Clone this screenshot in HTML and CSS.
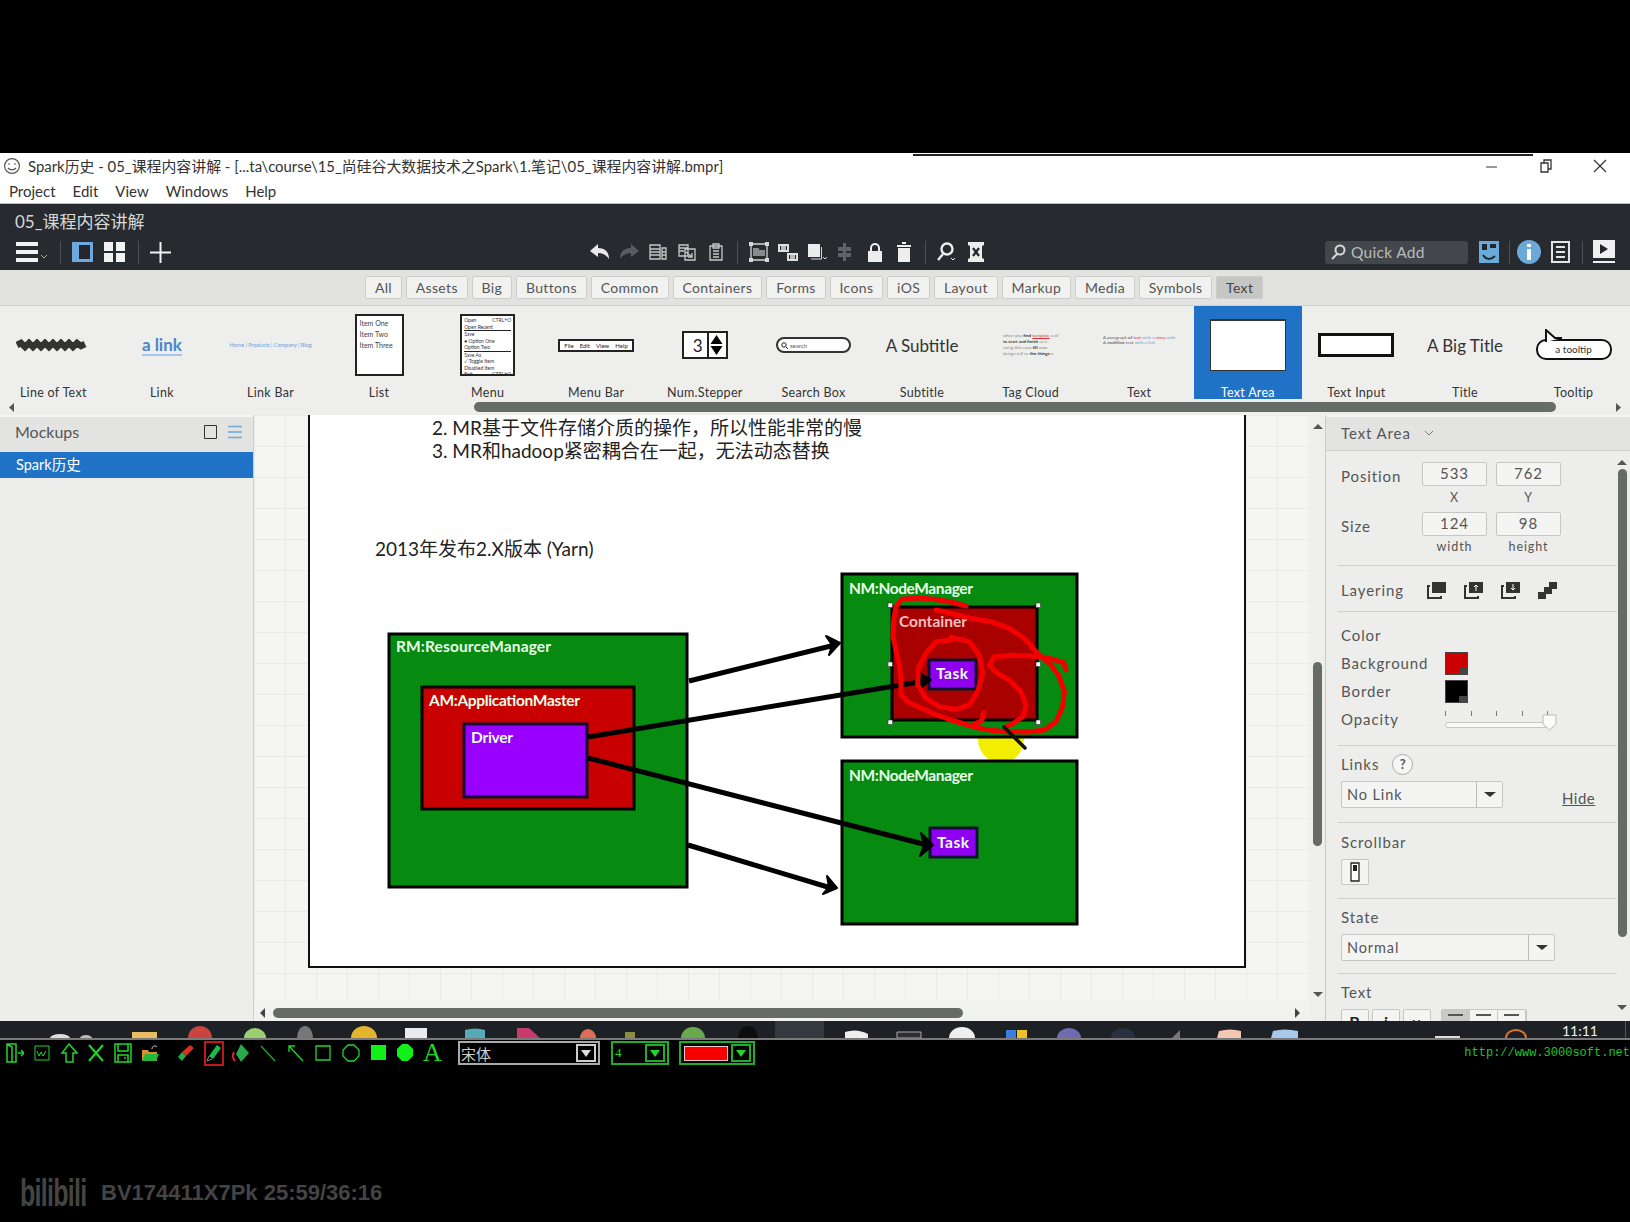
FILE: index.html
```html
<!DOCTYPE html>
<html>
<head>
  <meta charset="UTF-8">
  <title>Spark历史 - Balsamiq</title>
  <link rel="stylesheet" href="styles.css">
</head>
<body>
  <div class="video-top"></div>
  <div class="stray-line"></div>

  <div class="titlebar">
    <svg class="app-logo" width="18" height="18" viewBox="0 0 18 18" fill="none" stroke="#555" stroke-width="1.2"><circle cx="9" cy="9" r="7.4"/><path d="M5 7h2M11 7h2M5 11c2 2.4 6 2.4 8 0"/></svg>
    <span class="title-text">Spark历史 - 05_课程内容讲解 - [...ta\course\15_尚硅谷大数据技术之Spark\1.笔记\05_课程内容讲解.bmpr]</span>
    <div class="win-controls">
      <svg width="14" height="14" viewBox="0 0 14 14" stroke="#333" fill="none"><path d="M1 8h11"/></svg>
      <svg width="14" height="14" viewBox="0 0 14 14" stroke="#333" fill="none" stroke-width="1.3"><path d="M2 4h7v9H2zM5 4V1h7v9H9"/></svg>
      <svg width="14" height="14" viewBox="0 0 14 14" stroke="#333" fill="none" stroke-width="1.2"><path d="M1 1l12 12M13 1L1 13"/></svg>
    </div>
  </div>
  <div class="menubar">
    <span>Project</span><span>Edit</span><span>View</span><span>Windows</span><span>Help</span>
  </div>

  <div class="header">
    <div class="doc-name">05_课程内容讲解</div>
    <div class="toolbar">
      <div class="tool-left">
        <svg width="24" height="20" viewBox="0 0 24 20" fill="#f2f2f2"><path d="M0 0h22v4H0zM0 8h22v4H0zM0 16h22v4H0z"/></svg>
        <svg class="mini-chevron" width="6" height="4" viewBox="0 0 6 4" fill="none" stroke="#aaa"><path d="M0 0l3 3 3-3"/></svg>
        <i class="tool-sep sep-a"></i>
        <svg class="icon-panel" width="21" height="20" viewBox="0 0 21 20"><path fill="#6fa8dc" d="M0 0h21v20H0z"/><path fill="#23272b" d="M7 3h11v14H7z"/></svg>
        <svg class="icon-grid" width="21" height="20" viewBox="0 0 21 20" fill="#f2f2f2"><path d="M0 0h9v9H0zM12 0h9v9h-9zM0 11h9v9H0zM12 11h9v9h-9z"/></svg>
        <i class="tool-sep sep-b"></i>
        <svg class="icon-plus" width="21" height="21" viewBox="0 0 21 21" fill="#f2f2f2"><path d="M9.5 0h2v9.5H21v2h-9.5V21h-2v-9.5H0v-2h9.5z"/></svg>
      </div>
      <div class="tool-center">
        <svg class="tico" viewBox="0 0 20 20" fill="#e9e9e9"><path d="M8 2L0 9l8 6v-4c5 0 8 2 11 6 0-7-4-11-11-11z"/></svg>
        <svg class="tico" viewBox="0 0 20 20" fill="#595d61"><path d="M12 2l8 7-8 6v-4c-5 0-8 2-11 6 0-7 4-11 11-11z"/></svg>
        <svg class="tico" viewBox="0 0 20 20" fill="none" stroke="#c8c8c8" stroke-width="1.3"><path d="M2 3h10v14H2zM2 7h10M2 10h10M2 13h10M14 6h4v11h-4zM14 10h4M14 13h4"/></svg>
        <svg class="tico" viewBox="0 0 20 20" fill="none" stroke="#c8c8c8" stroke-width="1.3"><path d="M2 3h9v11H2zM2 6h9M2 9h5M8 7h10v11H8zM9 10l6 5M15 11v4h-4"/></svg>
        <svg class="tico" viewBox="0 0 20 20" fill="none" stroke="#c8c8c8" stroke-width="1.3"><path d="M4 4h12v14H4zM7 2h6v4H7zM7 9h6M7 12h6M7 15h6"/></svg>
        <i class="tool-sep center-sep"></i>
        <svg class="tico" viewBox="0 0 20 20" fill="none" stroke="#d8d8d8" stroke-width="1.3"><path d="M2 2h16v16H2z"/><path fill="#d8d8d8" stroke="none" d="M10 8h6v6h-6zM4 6h6v8H4z" opacity=".55"/><path fill="#d8d8d8" stroke="none" d="M0 0h4v4H0zM16 0h4v4h-4zM0 16h4v4H0zM16 16h4v4h-4z"/></svg>
        <svg class="tico" viewBox="0 0 20 20" fill="#e0e0e0"><path d="M0 2h11v8H0zM9 11h11v8H9z"/><path fill="#23272b" d="M2 4h7v4H2zM11 13h7v4h-7z"/><path d="M3 4h5v4H3zM12 13h5v4h-5z" opacity=".8"/></svg>
        <svg class="tico" viewBox="0 0 20 20" fill="none" stroke="#d8d8d8"><path fill="#ececec" stroke="none" d="M1 2h12v13H1z"/><path d="M14.500 5v12H4M16 15l2 2 2-2"/></svg>
        <svg class="tico" viewBox="0 0 20 20" fill="#5f6367"><path d="M7 1h3v4h5v4h-5v2h5v4h-5v4H7v-4H2v-4h5V9H2V5h5z"/></svg>
        <svg class="tico" viewBox="0 0 20 20" fill="#ededed"><path d="M3 9h14v11H3z"/><path fill="none" stroke="#ededed" stroke-width="2" d="M6 9V6a4 4 0 0 1 8 0v3"/></svg>
        <svg class="tico" viewBox="0 0 20 20" fill="#ededed"><path d="M4 6h12v14H4zM3 3h14v2H3zM8 0h4v2H8z"/></svg>
        <i class="tool-sep center-sep"></i>
        <svg class="tico" viewBox="0 0 20 20" fill="none" stroke="#ededed" stroke-width="2.4"><circle cx="10" cy="7" r="5.500"/><path d="M6 12l-5 6"/><path stroke-width="1" d="M14 16l2 2 2-2"/></svg>
        <svg class="tico" viewBox="0 0 20 20" fill="#ededed"><path d="M2 0h16v3l-2 1v12l2 1v3H2v-3l2-1V4L2 3z"/><path fill="none" stroke="#23272b" stroke-width="2.200" d="M7 6l6 8M13 6l-6 8"/></svg>
      </div>
      <div class="tool-right">
        <div class="quick-add">
          <svg width="16" height="16" viewBox="0 0 16 16" fill="none" stroke="#d8d8d8" stroke-width="2"><circle cx="10" cy="6" r="4.500"/><path d="M7 10l-5 5"/></svg>
          <span>Quick Add</span>
        </div>
        <svg class="face" width="22" height="22" viewBox="0 0 22 22"><path fill="#6aa9d8" d="M1 0h20v22H1z"/><path fill="#23272b" d="M4 3h5v6H4zM12 3h6v4h-6z"/><path fill="none" stroke="#23272b" stroke-width="2" d="M5 14c3 5 8 5 12 1"/></svg>
        <i class="tool-sep"></i>
        <svg class="info" width="24" height="24" viewBox="0 0 24 24"><circle cx="12" cy="12" r="12" fill="#6aa9d8"/><path fill="#fff" d="M10 4h4v3h-4zM10 9h4v11h-4z"/></svg>
        <svg class="doc-ico" width="19" height="22" viewBox="0 0 19 22" fill="none" stroke="#e4e4e4" stroke-width="2"><path d="M1 1h17v20H1zM5 6h9M5 11h9M5 16h9"/></svg>
        <i class="tool-sep"></i>
        <svg class="play" width="24" height="24" viewBox="0 0 24 24" fill="#f0f0f0"><path d="M1 0h22v18H1zM1 21h22v2H1z"/><path fill="#23272b" d="M8 4l8 5-8 5z"/></svg>
      </div>
    </div>
  </div>

  <div class="filter-bar">
    <span class="tab">All</span><span class="tab">Assets</span><span class="tab">Big</span><span class="tab">Buttons</span><span class="tab">Common</span><span class="tab">Containers</span><span class="tab">Forms</span><span class="tab">Icons</span><span class="tab">iOS</span><span class="tab">Layout</span><span class="tab">Markup</span><span class="tab">Media</span><span class="tab">Symbols</span><span class="tab active">Text</span>
  </div>

  <div class="library">
    <div class="lib-row">
      <div class="lib-item"><div class="preview">
        <svg width="74" height="14" viewBox="0 0 74 14" fill="none" stroke="#333" stroke-width="6.500"><path d="M1 7l4-2 4 4 4-4 4 4 4-4 4 4 4-4 4 4 4-4 4 4 4-4 4 4 4-4 4 4 4-4 4 3 4-2"/></svg>
      </div><div class="lib-label">Line of Text</div></div>
      <div class="lib-item"><div class="preview"><span class="pv-link">a link</span></div><div class="lib-label">Link</div></div>
      <div class="lib-item"><div class="preview"><span class="pv-linkbar">Home | Products | Company | Blog</span></div><div class="lib-label">Link Bar</div></div>
      <div class="lib-item"><div class="preview"><div class="pv-list"><div>Item One</div><div>Item Two</div><div>Item Three</div></div></div><div class="lib-label">List</div></div>
      <div class="lib-item"><div class="preview"><div class="pv-menu">
        <div class="mrow">Open <em>CTRL+O</em></div><div class="mrow">Open Recent</div><div class="mrow sep">Save</div><div class="mrow">● Option One</div><div class="mrow">Option Two</div><div class="mrow sep">Save As</div><div class="mrow">✓ Toggle Item</div><div class="mrow">Disabled Item</div><div class="mrow">Exit <em>CTRL+Q</em></div>
      </div></div><div class="lib-label">Menu</div></div>
      <div class="lib-item"><div class="preview"><div class="pv-menubar"><span>File</span><span>Edit</span><span>View</span><span>Help</span></div></div><div class="lib-label">Menu Bar</div></div>
      <div class="lib-item"><div class="preview"><div class="pv-stepper"><span>3</span><svg width="15" height="24" viewBox="0 0 15 24"><path d="M0 0h15v24H0z" fill="#fff"/><path d="M7.500 2l6 9h-12zM7.500 22l6-9h-12z"/></svg></div></div><div class="lib-label">Num.Stepper</div></div>
      <div class="lib-item"><div class="preview"><div class="pv-search"><svg width="7" height="7" viewBox="0 0 7 7" fill="none" stroke="#222"><circle cx="3" cy="3" r="2.200"/><path d="M5 5l2 2"/></svg>search</div></div><div class="lib-label">Search Box</div></div>
      <div class="lib-item"><div class="preview"><span class="pv-head">A Subtitle</span></div><div class="lib-label">Subtitle</div></div>
      <div class="lib-item"><div class="preview"><div class="pv-cloud">when you <b>find</b> <u>template</u> a of<br><b>to start and finish</b> us a<br>using this easy <b>fill</b> now<br>design tell us <b>the</b> <b>things</b> a</div></div><div class="lib-label">Tag Cloud</div></div>
      <div class="lib-item"><div class="preview pv-up"><div class="pv-text">A paragraph <b>of</b> <u>text</u> <i>with a</i> <s>story</s> <i>with</i><br>A <b>multiline</b> text <i>with a</i> <i>link</i></div></div><div class="lib-label">Text</div></div>
      <div class="lib-item selected"><div class="preview"><div class="pv-area"></div></div><div class="lib-label">Text Area</div></div>
      <div class="lib-item"><div class="preview"><div class="pv-input"></div></div><div class="lib-label">Text Input</div></div>
      <div class="lib-item"><div class="preview"><span class="pv-head">A Big Title</span></div><div class="lib-label">Title</div></div>
      <div class="lib-item"><div class="preview"><div class="pv-tooltip"><svg width="20" height="14" viewBox="0 0 20 14"><path d="M2 13V1l9 8 7 0" fill="#fff" stroke="#111" stroke-width="2"/></svg><span>a tooltip</span></div></div><div class="lib-label">Tooltip</div></div>
    </div>
    <div class="lib-scroll">
      <svg class="arr" width="5" height="9" viewBox="0 0 5 9" fill="#555"><path d="M5 0v9L0 4.500z"/></svg>
      <div class="lib-thumb"></div>
      <svg class="arr arr-r" width="5" height="9" viewBox="0 0 5 9" fill="#555"><path d="M0 0v9l5-4.500z"/></svg>
    </div>
  </div>

  <div class="workspace">
    <aside class="sidebar">
      <div class="side-head">
        <span>Mockups</span>
        <div class="side-icons">
          <svg width="13" height="14" viewBox="0 0 13 14" fill="none" stroke="#333"><path d="M.5.500h12v13H.5z"/></svg>
          <svg width="14" height="14" viewBox="0 0 14 14" fill="none" stroke="#6aa9d8" stroke-width="1.5"><path d="M0 1.500h14M0 7h14M0 12.500h14"/></svg>
        </div>
      </div>
      <div class="side-item">Spark历史</div>
    </aside>

    <main class="canvas-col">
      <div class="canvas">
        <div class="paper">
          <svg class="diagram" width="936" height="552" viewBox="309 415 936 552">
            <text class="note" x="431" y="435">2. MR基于文件存储介质的操作，所以性能非常的慢</text>
            <text class="note" x="431" y="458">3. MR和hadoop紧密耦合在一起，无法动态替换</text>
            <text class="note" x="374" y="556">2013年发布2.X版本 (Yarn)</text>

            <!-- left box -->
            <rect x="388" y="634" width="298" height="253" fill="#068a10" stroke="#000" stroke-width="3"/>
            <rect x="421" y="687" width="212" height="122" fill="#c90000" stroke="#000" stroke-width="3"/>
            <rect x="463" y="724" width="123" height="73" fill="#9900ff" stroke="#101030" stroke-width="3"/>
            <text class="lbl" x="395" y="652" textLength="155">RM:ResourceManager</text>
            <text class="lbl" x="428" y="706" textLength="151">AM:ApplicationMaster</text>
            <text class="lbl" x="470" y="743" textLength="42">Driver</text>

            <!-- right boxes -->
            <ellipse cx="1000" cy="739" rx="23" ry="24" fill="#f3ee00"/>
            <rect x="841" y="574" width="235" height="163" fill="#068a10" stroke="#000" stroke-width="3"/>
            <rect x="891" y="607" width="145" height="113" fill="#a90000" stroke="#000" stroke-width="3"/>
            <rect x="928" y="660" width="47" height="29" fill="#9000f0" stroke="#101030" stroke-width="3"/>
            <text class="lbl" x="848" y="594" textLength="124">NM:NodeManager</text>
            <text class="lbl con" x="898" y="627" textLength="68">Container</text>
            <text class="lbl" x="935" y="679" textLength="32">Task</text>

            <rect x="841" y="761" width="235" height="163" fill="#068a10" stroke="#000" stroke-width="3"/>
            <rect x="929" y="828" width="47" height="29" fill="#9000f0" stroke="#101030" stroke-width="3"/>
            <text class="lbl" x="848" y="781" textLength="124">NM:NodeManager</text>
            <text class="lbl" x="936" y="848" textLength="32">Task</text>

            <!-- arrows -->
            <g fill="none" stroke="#000" stroke-width="5" stroke-linejoin="round">
              <path d="M688 681L834 645"/>
              <path d="M587 737L924 681"/>
              <path d="M587 758L926 845"/>
              <path d="M687 845L830 888"/>
            </g>
            <g fill="#000" stroke="#000" stroke-width="2" stroke-linejoin="round">
              <path d="M825 636L839 643L828 655L831 645z"/>
              <path d="M916 671L930 680L917 690L921 681z"/>
              <path d="M920 833L932 845L919 856L923 845z"/>
              <path d="M826 876L836 888L822 894L828 887z"/>
            </g>

            <!-- selection handles -->
            <g fill="#fff" stroke="#333" stroke-width=".6">
              <rect x="887" y="603" width="4.500" height="4.500"/><rect x="1035" y="603" width="4.500" height="4.500"/>
              <rect x="887" y="662" width="4.500" height="4.500"/><rect x="1035" y="662" width="4.500" height="4.500"/>
              <rect x="887" y="720" width="4.500" height="4.500"/><rect x="1035" y="720" width="4.500" height="4.500"/>
            </g>

            <!-- pen scribble -->
            <g transform="translate(880 590) scale(.3333)" fill="none" stroke="#f40000" stroke-width="15" stroke-linecap="round" stroke-linejoin="round">
              <polyline points="255,48 210,36 160,28 110,24 62,28 45,50 38,90 36,140 45,180 55,225 60,270 60,315 80,335 115,352 160,372 210,390 260,405 310,418 370,425 440,426 490,420 525,395 545,350 550,305 535,260 510,225 470,190 430,145 385,115 330,95 270,85 210,70 165,60"/>
              <polyline points="210,150 165,155 135,190 112,235 110,285 135,325 175,350 225,358 265,345 290,305 305,250 295,195 265,155 210,142"/>
              <polyline points="555,240 548,218 505,205 450,198 395,196 340,200 325,225 345,248 385,270 420,305 435,345 428,378 400,398 375,410"/>
              <polyline points="308,368 302,392 275,405"/>
            </g>
            <path d="M1003 727L1024 748" stroke="#111" stroke-width="3.500" stroke-linecap="round"/>
          </svg>
        </div>
      </div>
      <div class="h-scroll">
        <svg width="5" height="10" viewBox="0 0 5 10" fill="#444"><path d="M5 0v10L0 5z"/></svg>
        <div class="h-thumb"></div>
        <svg width="5" height="10" viewBox="0 0 5 10" fill="#444"><path d="M0 0v10l5-5z"/></svg>
      </div>
    </main>

    <div class="v-scroll">
      <svg width="10" height="5" viewBox="0 0 10 5" fill="#555"><path d="M0 5h10L5 0z"/></svg>
      <div class="v-thumb"></div>
      <svg width="10" height="5" viewBox="0 0 10 5" fill="#555"><path d="M0 0h10L5 5z"/></svg>
    </div>

    <aside class="panel">
      <div class="panel-head">
        <span>Text Area</span>
        <svg width="10" height="6" viewBox="0 0 10 6" fill="none" stroke="#777"><path d="M1 1l4 4 4-4"/></svg>
      </div>
      <div class="panel-body">
        <div class="panel-content">
          <section class="sec sec-geo">
            <div class="geo-grid">
              <label>Position</label><span class="num">533</span><span class="num">762</span>
              <i></i><small>X</small><small>Y</small>
              <label>Size</label><span class="num">124</span><span class="num">98</span>
              <i></i><small class="low">width</small><small class="low">height</small>
            </div>
          </section>
          <section class="sec sec-layer">
            <label>Layering</label>
            <svg width="19" height="17" viewBox="0 0 19 17"><path fill="#333" d="M5 0h14v11H5z"/><path fill="none" stroke="#333" stroke-width="2" d="M3 4H1v12h13v-2"/></svg>
            <svg width="19" height="17" viewBox="0 0 19 17"><path fill="#333" d="M5 0h14v11H5z"/><path fill="none" stroke="#333" stroke-width="2" d="M3 4H1v12h13v-2"/><path fill="none" stroke="#fff" d="M12 9V3M10 5l2-2 2 2"/></svg>
            <svg width="19" height="17" viewBox="0 0 19 17"><path fill="#333" d="M5 0h14v11H5z"/><path fill="none" stroke="#333" stroke-width="2" d="M3 4H1v12h13v-2"/><path fill="none" stroke="#fff" d="M12 2v6M10 6l2 2 2-2"/></svg>
            <svg width="19" height="17" viewBox="0 0 19 17" fill="#333"><path d="M11 0h8v7h-8zM6 5h8v7H6zM0 10h8v7H0z"/></svg>
          </section>
          <section class="sec sec-color">
            <div class="crow"><label>Color</label></div>
            <div class="crow"><label>Background</label><span class="swatch red"><i></i></span></div>
            <div class="crow"><label>Border</label><span class="swatch black"><i></i></span></div>
            <div class="crow"><label>Opacity</label>
              <div class="slider"><div class="ticks"><i></i><i></i><i></i><i></i><i></i></div><div class="track"><svg class="knob" width="15" height="17" viewBox="0 0 15 17"><path d="M1 1h13v9l-6.500 6L1 10z" fill="#fbfbfb" stroke="#bbb"/></svg></div></div>
            </div>
          </section>
          <section class="sec sec-links">
            <div class="links-row"><label>Links</label><span class="help">?</span></div>
            <div class="links-combo">
              <div class="combo combo-link"><span>No Link</span><b><i></i></b></div>
              <a class="hide">Hide</a>
            </div>
          </section>
          <section class="sec sec-scroll">
            <label>Scrollbar</label>
            <div class="sq-btn"><svg width="10" height="20" viewBox="0 0 10 20"><path d="M1 1h8v18H1z" fill="#fff" stroke="#222" stroke-width="1.300"/><path d="M3 3h4v6H3z" fill="#222"/></svg></div>
          </section>
          <section class="sec sec-state">
            <label>State</label>
            <div class="combo combo-state"><span>Normal</span><b><i></i></b></div>
          </section>
          <section class="sec sec-text">
            <label>Text</label>
            <div class="fmt-row">
              <span class="fbtn bold">B</span><span class="fbtn ital">i</span><span class="fbtn und">u</span>
              <div class="align-group"><span class="on"><i></i></span><span><i></i></span><span><i></i></span></div>
            </div>
          </section>
        </div>
        <div class="panel-scroll">
          <svg width="10" height="5" viewBox="0 0 10 5" fill="#555"><path d="M0 5h10L5 0z"/></svg>
          <div class="panel-thumb"></div>
          <svg width="10" height="5" viewBox="0 0 10 5" fill="#555"><path d="M0 0h10L5 5z"/></svg>
        </div>
      </div>
    </aside>
  </div>

  <div class="taskstrip">
    <svg width="1630" height="17" viewBox="0 0 1630 17">
      <path fill="#33393f" d="M775 0h49v17h-49z"/>
      <ellipse cx="60" cy="17" rx="10" ry="4" fill="#ddd"/>
      <ellipse cx="86" cy="17" rx="6" ry="3" fill="#bbb"/>
      <path fill="#e7bf62" d="M132 17v-6h25v6z"/>
      <ellipse cx="200" cy="17" rx="12" ry="12" fill="#c9443f"/>
      <ellipse cx="255" cy="17" rx="11" ry="10" fill="#9ccf72"/>
      <ellipse cx="305" cy="17" rx="8" ry="12" fill="#777"/>
      <ellipse cx="364" cy="17" rx="13" ry="12" fill="#e3b42d"/>
      <path fill="#e9e9ee" d="M405 7h22v10h-22z"/>
      <path fill="#56a9b6" d="M465 9q10-3 20 0v8h-20z"/>
      <path fill="#c93b6b" d="M517 7l12 0 11 10h-23z"/>
      <ellipse cx="588" cy="17" rx="8" ry="9" fill="#dd6f57"/>
      <path fill="#8a8d3f" d="M625 11h10v6h-10z"/>
      <ellipse cx="693" cy="17" rx="12" ry="11" fill="#6aa84f"/>
      <ellipse cx="748" cy="17" rx="10" ry="12" fill="#0d0d0d"/>
      <path fill="#eee" d="M845 11q12-4 23 2v4h-23z"/>
      <path fill="#2c2f33" stroke="#aaa" d="M897 11h24v6h-24z"/>
      <ellipse cx="962" cy="17" rx="13" ry="11" fill="#eee"/>
      <path fill="#3b7ddd" d="M1006 9h10v8h-10z"/><path fill="#efc22a" d="M1017 9h10v8h-10z"/>
      <ellipse cx="1069" cy="17" rx="12" ry="10" fill="#6f6bb0"/>
      <ellipse cx="1123" cy="17" rx="12" ry="10" fill="#2b3040"/>
      <path fill="#777" d="M1172 17l8-8v8z"/>
      <path fill="#f3c7b4" d="M1219 10q11-3 22 0v7h-24z"/>
      <path fill="#a9c8ea" d="M1273 10q11-3 25 0v7h-27z"/>
      <path fill="#ddd" d="M1435 15h25v2h-25z"/>
      <path fill="none" stroke="#d9772e" stroke-width="2" d="M1506 17a10 8 0 0 1 20 0"/>
      <path fill="#555" d="M1625 0h1v17h-1z"/>
    </svg>
    <span class="clock">11:11</span>
  </div>

  <div class="video-bottom">
    <div class="pen-tools">
      <div class="tools">
        <svg class="g w18" viewBox="0 0 18 20" fill="none" stroke="#22d52a" stroke-width="1.500"><path d="M1 1h9v18H1zM1 1l5 3v15M12 10h5M15 7l3 3-3 3"/></svg>
        <svg class="g w18" viewBox="0 0 18 20" fill="none" stroke="#22d52a"><path d="M2 3h14v14H2zM4 8l2 5 2-4 2 4 3-5"/></svg>
        <svg class="g w18" viewBox="0 0 18 20" fill="none" stroke="#22d52a" stroke-width="1.500"><path d="M9 1l8 9h-4v9H6v-9H2z"/></svg>
        <svg class="g w18" viewBox="0 0 18 20" fill="none" stroke="#22d52a" stroke-width="2"><path d="M2 2l14 16M16 2L2 18"/></svg>
        <svg class="g w18" viewBox="0 0 18 20" fill="none" stroke="#22d52a" stroke-width="1.500"><path d="M1 1h16v18H1zM4 1v7h10V1M4 19v-7h10v7M10 15h2"/></svg>
        <svg class="g w18" viewBox="0 0 18 20"><path fill="#d9902e" d="M1 7h6l1 2h8v9H1z"/><path fill="#22b83a" d="M1 18l3-7h14l-3 7z"/><path fill="none" stroke="#ddd" d="M11 6c0-3 3-4 5-2"/></svg>
        <i class="g-sep"></i>
        <svg class="g w18 eraser" viewBox="0 0 18 20"><path fill="#d83020" d="M5 9l8-7 4 3-8 8z"/><path fill="#2aa84a" d="M1 14l4-5 4 4-4 5z"/></svg>
        <div class="pen-on"><svg width="16" height="20" viewBox="0 0 16 20"><path fill="#22b84a" d="M3 13L11 2l4 3-8 11z"/><path fill="none" stroke="#888" d="M3 13l-2 5 5-2"/></svg></div>
        <svg class="g w18 bucket" viewBox="0 0 18 20"><path fill="#2aa84a" d="M9 1l8 9-8 9-5-8z"/><path fill="none" stroke="#e02020" stroke-width="2" d="M2 9c-2 3-1 7 1 9"/></svg>
        <svg class="g w18" viewBox="0 0 18 20" fill="none" stroke="#1fae27" stroke-width="1.200"><path d="M2 3l14 15"/></svg>
        <svg class="g w18 wide" viewBox="0 0 18 20" fill="none" stroke="#22d52a" stroke-width="1.300"><path d="M2 3l14 15M2 9V3h6"/></svg>
        <svg class="g w18" viewBox="0 0 18 20" fill="none" stroke="#22d52a" stroke-width="1.300"><path d="M2 3h14v14H2z"/></svg>
        <svg class="g w18 wide" viewBox="0 0 18 20" fill="none" stroke="#22d52a" stroke-width="1.300"><path d="M6 2h6l5 5v6l-5 5H6l-5-5V7z"/></svg>
        <svg class="g w18" viewBox="0 0 18 20" fill="#12f01a"><path d="M2 2h15v15H2z"/></svg>
        <svg class="g w18" viewBox="0 0 18 20" fill="#12f01a"><path d="M6 1h6l5 5v7l-5 5H6l-5-5V6z"/></svg>
        <span class="font-a">A</span>
        <i class="g-sep"></i>
      </div>
      <div class="sel sel-font"><span>宋体</span><b><i></i></b></div>
      <div class="sel sel-size"><span>4</span><b><i></i></b></div>
      <div class="sel sel-color"><span class="redbar"></span><b><i></i></b></div>
      <span class="site">http://www.3000soft.net</span>
    </div>
    <div class="watermark">
      <span class="bili">bilibili</span>
      <span class="bv">BV174411X7Pk 25:59/36:16</span>
    </div>
  </div>
</body>
</html>
```

FILE: styles.css
```css
* {
  box-sizing: border-box;
}
html, body {
  margin: 0;
  padding: 0;
}
body {
  width: 1630px;
  height: 1222px;
  overflow: hidden;
  background-color: #000;
  font-family: Lato, "Noto Sans CJK SC", sans-serif;
  color: #444;
  position: relative;
}
i {
  font-style: normal;
}
label {
  display: block;
}

.video-top {
  height: 153px;
  background-color: #000;
}
.stray-line {
  position: absolute;
  left: 913px;
  top: 154px;
  width: 620px;
  height: 2px;
  background-color: #222;
}

/* window title + menu */
.titlebar {
  height: 25px;
  background-color: #fff;
  display: flex;
  align-items: center;
  padding-left: 3px;
}
.title-text {
  margin-left: 7px;
  font-size: 14.900px;
  color: #333;
  white-space: nowrap;
}
.win-controls {
  margin-left: auto;
  display: flex;
  gap: 40px;
  padding-right: 23px;
}
.menubar {
  height: 26px;
  background-color: #fff;
  display: flex;
  align-items: center;
  gap: 17px;
  padding-left: 9px;
  font-size: 15px;
  color: #333;
  border-bottom: 1px solid #bbb;
}

/* dark header */
.header {
  height: 66px;
  background-color: #272b30;
}
.doc-name {
  height: 33px;
  padding: 4px 0 0 15px;
  font-size: 17px;
  color: #d8d8d8;
}
.toolbar {
  height: 30px;
  display: grid;
  grid-template-columns: 590px 735px 1fr;
  align-items: center;
}
.tool-left {
  display: flex;
  align-items: center;
  padding-left: 16px;
}
.mini-chevron {
  margin: 10px 0 0 1px;
}
.tool-sep {
  display: block;
  width: 1px;
  height: 23px;
  background-color: #4b4f54;
}
.sep-a {
  margin: 0 11px 0 13px;
}
.icon-grid {
  margin-left: 11px;
}
.sep-b {
  margin: 0 11px 0 13px;
}
.tool-center {
  display: flex;
  align-items: center;
  gap: 9px;
}
.tico {
  width: 20px;
  height: 20px;
}
.center-sep {
  margin: 0 2px;
}
.tool-right {
  display: flex;
  align-items: center;
}
.quick-add {
  width: 143px;
  height: 23px;
  background-color: #43474c;
  border-radius: 3px;
  display: flex;
  align-items: center;
  gap: 5px;
  padding-left: 5px;
  font-size: 15.500px;
  letter-spacing: .3px;
  color: #b9bcbf;
}
.face {
  margin-left: 10px;
}
.tool-right .tool-sep {
  margin-left: 9px;
}
.info {
  margin-left: 7px;
}
.doc-ico {
  margin-left: 10px;
}
.play {
  margin-left: 9px;
}
.tool-right .doc-ico + .tool-sep {
  margin-left: 12px;
}

/* category tabs */
.filter-bar {
  height: 36px;
  background-color: #e2e3e1;
  border-bottom: 1px solid #cfd0ce;
  display: flex;
  justify-content: flex-start;
  align-items: center;
  gap: 4px;
  padding-left: 365px;
}
.tab {
  height: 23px;
  line-height: 21px;
  padding: 0 8.900px;
  background-color: #f1f2f0;
  border: 1px solid #cdcecc;
  border-radius: 2px;
  font-size: 14px;
  letter-spacing: .34px;
  color: #555;
}
.tab.active {
  background-color: #c6c7c5;
  color: #444;
}

/* component library */
.library {
  height: 109px;
  background-color: #eeefed;
  overflow: hidden;
}
.lib-row {
  display: flex;
  margin-left: -1px;
  height: 93px;
}
.lib-item {
  flex: 0 0 108.600px;
}
.preview {
  height: 80px;
  padding-bottom: 2px;
  display: flex;
  align-items: center;
  justify-content: center;
}
.pv-up {
  padding-bottom: 12px;
}
.lib-label {
  text-align: center;
  font-size: 12.500px;
  line-height: 13px;
  letter-spacing: .3px;
  color: #333;
}
.lib-item.selected {
  background-color: #2072c6;
}
.lib-item.selected .lib-label {
  color: #fff;
}
.lib-scroll {
  height: 16px;
  display: flex;
  align-items: center;
  padding: 0 9px;
  gap: 0;
}
.arr {
  flex: none;
}
.lib-thumb {
  margin-left: 460px;
  width: 1084px;
  height: 10px;
  border-radius: 5px;
  background-color: #676b68;
}
.arr-r {
  margin-left: 60px;
}

/* little previews */
.pv-link {
  font-size: 17px;
  font-weight: 700;
  color: #4a86c8;
  border-bottom: 2px solid #a8c6e8;
  line-height: 19px;
}
.pv-linkbar {
  font-size: 5.500px;
  color: #6d9fd6;
  white-space: nowrap;
}
.pv-list {
  width: 49px;
  height: 62px;
  background-color: #fff;
  border: 2px solid #222;
  font-size: 7px;
  line-height: 11px;
  padding: 2px 3px;
  color: #444;
}
.pv-menu {
  width: 55px;
  height: 62px;
  background-color: #fff;
  border: 2px solid #222;
  font-size: 5px;
  line-height: 6.500px;
  color: #333;
  padding: 1px 2px;
  overflow: hidden;
}
.mrow {
  display: flex;
  justify-content: space-between;
  white-space: nowrap;
}
.mrow em {
  font-style: normal;
}
.mrow.sep {
  border-top: 1px solid #222;
}
.pv-menubar {
  width: 76px;
  height: 13px;
  background-color: #fff;
  border: 2px solid #222;
  font-size: 6px;
  line-height: 9px;
  display: flex;
  gap: 6px;
  padding-left: 4px;
  color: #222;
}
.pv-stepper {
  width: 46px;
  height: 28px;
  background-color: #fff;
  border: 2px solid #222;
  display: flex;
  align-items: center;
  justify-content: space-between;
  padding: 0 2px 0 9px;
  font-size: 17px;
  color: #222;
}
.pv-stepper svg {
  border-left: 2px solid #222;
  width: 17px;
}
.pv-search {
  width: 75px;
  height: 16px;
  background-color: #fff;
  border: 2px solid #333;
  border-radius: 8px;
  font-size: 6px;
  display: flex;
  align-items: center;
  gap: 2px;
  padding-left: 3px;
  color: #555;
}
.pv-head {
  font-size: 17px;
  color: #333;
  white-space: nowrap;
}
.pv-cloud {
  font-size: 4.500px;
  line-height: 6px;
  color: #888;
  white-space: nowrap;
}
.pv-cloud b {
  color: #333;
}
.pv-cloud u {
  color: #d33;
}
.pv-text {
  font-size: 4.500px;
  line-height: 5px;
  color: #666;
  white-space: nowrap;
}
.pv-text u, .pv-text s {
  color: #d33;
  text-decoration: none;
}
.pv-text i {
  color: #6d9fd6;
}
.pv-area {
  width: 76px;
  height: 52px;
  background-color: #fff;
  border: 1px solid #333;
  border-top-width: 2px;
}
.pv-input {
  width: 76px;
  height: 24px;
  background-color: #fff;
  border: 3px solid #111;
}
.pv-tooltip {
  position: relative;
  width: 76px;
  height: 21px;
  margin-top: 8px;
  background-color: #fff;
  border: 2px solid #111;
  border-radius: 10px;
  font-size: 10px;
  line-height: 17px;
  text-align: center;
  color: #333;
}
.pv-tooltip svg {
  position: absolute;
  left: 6px;
  top: -12px;
}

/* middle area */
.workspace {
  height: 606px;
  display: flex;
  background-color: #edeeec;
}
.sidebar {
  width: 254px;
  border-right: 1px solid #cfd0ce;
  flex: none;
}
.side-head {
  height: 37px;
  background-color: #e3e4e2;
  border-top: 2px solid #f6f6f5;
  display: flex;
  align-items: center;
  justify-content: space-between;
  padding: 0 11px 6px 15px;
  font-size: 16px;
  color: #555;
}
.side-icons {
  display: flex;
  gap: 11px;
}
.side-item {
  height: 26px;
  line-height: 25px;
  background-color: #2072c6;
  color: #fff;
  font-size: 14.500px;
  padding-left: 16px;
}
.canvas-col {
  flex: 0 0 1056px;
  display: flex;
  flex-direction: column;
}
.canvas {
  flex: 1;
  overflow: hidden;
  padding-left: 54px;
  background-color: #f5f6f4;
  background-image:
    linear-gradient(#eaebe9 1px, transparent 1px),
    linear-gradient(90deg, #eaebe9 1px, transparent 1px);
  background-size: 31px 31px;
}
.paper {
  width: 938px;
  height: 553px;
  background-color: #fff;
  border: solid #111;
  border-width: 0 2px 2px 2px;
}
.diagram {
  display: block;
}
.note {
  font-family: Lato, "Noto Sans CJK SC", sans-serif;
  font-size: 19px;
  fill: #222;
}
.lbl {
  font-family: Lato, sans-serif;
  font-size: 15.500px;
  font-weight: 700;
  fill: #e8ffe8;
}
.lbl.con {
  fill: #f0c0c0;
}
.h-scroll {
  height: 21px;
  display: flex;
  align-items: center;
  padding: 4px 0 0 6px;
  background-color: #f1f2f0;
}
.h-thumb {
  margin-left: 8px;
  width: 690px;
  height: 10px;
  border-radius: 5px;
  background-color: #676b68;
}
.h-scroll svg:last-child {
  margin-left: 332px;
}
.v-scroll {
  flex: 0 0 15px;
  display: flex;
  flex-direction: column;
  align-items: center;
  padding-top: 9px;
  background-color: #eeefed;
  position: relative;
}
.v-thumb {
  margin-top: 233px;
  width: 9px;
  height: 184px;
  border-radius: 5px;
  background-color: #676b68;
}
.v-scroll svg:last-child {
  margin-top: 146px;
}

/* properties panel */
.panel {
  flex: 1;
  border-left: 1px solid #c9cac8;
  min-width: 0;
  display: flex;
  flex-direction: column;
  color: #555;
  font-size: 15px;
  letter-spacing: .9px;
}
.panel-head {
  height: 36px;
  flex: none;
  background-color: #e3e4e2;
  border-top: 2px solid #f6f6f5;
  border-bottom: 1px solid #cfd0ce;
  display: flex;
  align-items: center;
  gap: 13px;
  padding: 0 0 1px 15px;
}
.panel-body {
  flex: 1;
  display: flex;
  min-height: 0;
}
.panel-content {
  width: 291px;
  overflow: hidden;
  padding-left: 12px;
}
.sec {
  border-bottom: 1px solid #d0d1cf;
  padding-left: 3px;
}
.sec-geo {
  height: 115px;
  padding-top: 11px;
}
.geo-grid {
  display: grid;
  grid-template-columns: 72px 65px 65px;
  grid-template-rows: 24px 26px 24px 21px;
  column-gap: 9px;
  align-items: center;
}
.geo-grid label {
  padding-top: 4px;
}
.num {
  height: 24px;
  line-height: 21px;
  background-color: #f4f5f3;
  border: 1px solid #c6c7c5;
  border-radius: 2px;
  text-align: center;
  letter-spacing: 1px;
}
small {
  font-size: 12.500px;
  text-align: center;
  padding-bottom: 4px;
}
small.low {
  padding-bottom: 0;
}
.sec-layer {
  height: 46px;
  display: flex;
  align-items: center;
  gap: 18px;
  padding-top: 3px;
}
.sec-layer label {
  width: 68px;
}
.sec-color {
  height: 134px;
  padding-top: 9px;
}
.crow {
  height: 28px;
  display: flex;
  align-items: center;
}
.crow label {
  width: 104px;
}
.swatch {
  width: 23px;
  height: 23px;
  border: 1px solid #444;
  position: relative;
}
.swatch.red {
  background-color: #cc0000;
}
.swatch.black {
  background-color: #000;
}
.swatch i {
  position: absolute;
  right: 0;
  bottom: 0;
  width: 8px;
  height: 6px;
  background-color: #444;
}
.slider {
  width: 110px;
  padding-top: 1px;
}
.ticks {
  display: flex;
  justify-content: space-between;
  width: 103px;
  height: 11px;
}
.ticks i {
  width: 1px;
  height: 5px;
  background-color: #777;
}
.track {
  position: relative;
  height: 6px;
  background-color: #f8f8f7;
  border: 1px solid #c6c7c5;
  border-radius: 3px;
  width: 104px;
}
.knob {
  position: absolute;
  right: -9px;
  top: -9px;
}
.sec-links {
  height: 77px;
  padding-top: 6px;
}
.links-row {
  height: 24px;
  display: flex;
  align-items: center;
  gap: 13px;
}
.help {
  width: 21px;
  height: 21px;
  border: 1px solid #aaa;
  border-radius: 50%;
  background-color: #f6f6f5;
  font-size: 13px;
  font-weight: 700;
  line-height: 19px;
  text-align: center;
  letter-spacing: 0;
}
.links-combo {
  margin-top: 5px;
  display: flex;
  align-items: flex-start;
}
.combo {
  height: 27px;
  background-color: #f4f5f3;
  border: 1px solid #c6c7c5;
  border-radius: 2px;
  display: flex;
  align-items: center;
  padding-left: 5px;
  font-size: 14.500px;
}
.combo span {
  flex: 1;
}
.combo b {
  width: 26px;
  height: 100%;
  border-left: 1px solid #bbb;
  display: flex;
  align-items: center;
  justify-content: center;
}
.combo b i {
  border: 5px solid transparent;
  border-top: 5px solid #333;
  border-bottom-width: 0;
  border-left-width: 6px;
  border-right-width: 6px;
}
.combo-link {
  width: 162px;
}
.hide {
  margin: 8px 0 0 59px;
  text-decoration: underline;
  color: #555;
  letter-spacing: .5px;
}
.combo-state {
  width: 214px;
  margin-top: 7px;
}
.sec-scroll {
  height: 76px;
  padding-top: 9px;
}
.sec-scroll label, .sec-state label, .sec-text label {
  line-height: 20px;
}
.sq-btn {
  width: 28px;
  height: 26px;
  margin-top: 7px;
  background-color: #f4f5f3;
  border: 1px solid #c6c7c5;
  border-radius: 2px;
  display: flex;
  align-items: center;
  justify-content: center;
}
.sec-state {
  height: 75px;
  padding-top: 8px;
}
.sec-text {
  padding-top: 8px;
  border-bottom: 0;
}
.fmt-row {
  margin-top: 7px;
  display: flex;
  gap: 3px;
}
.fbtn {
  width: 28px;
  height: 26px;
  background-color: #f4f5f3;
  border: 1px solid #c6c7c5;
  border-radius: 2px;
  text-align: center;
  font-size: 16px;
  line-height: 24px;
  color: #222;
}
.fbtn.bold {
  font-weight: 700;
}
.fbtn.ital {
  font-style: italic;
  font-weight: 700;
}
.fbtn.und {
  text-decoration: underline;
}
.align-group {
  margin-left: 7px;
  display: flex;
  border: 1px solid #c6c7c5;
  border-radius: 2px;
  height: 26px;
  background-color: #f4f5f3;
}
.align-group span {
  width: 28px;
  padding: 4px 6px 0;
  border-right: 1px solid #c6c7c5;
}
.align-group span.on {
  background-color: #c9cac8;
}
.align-group i {
  display: block;
  height: 2px;
  background-color: #555;
}
.panel-scroll {
  flex: 1;
  display: flex;
  flex-direction: column;
  align-items: center;
  padding: 9px 3px 0 0;
}
.panel-thumb {
  margin-top: 4px;
  width: 9px;
  height: 468px;
  border-radius: 5px;
  background-color: #676b68;
}
.panel-scroll svg:last-child {
  margin-top: 68px;
}

/* bottom of the capture */
.taskstrip {
  height: 19px;
  background-color: #1d2125;
  border-bottom: 2px solid #7a7a7a;
  position: relative;
  overflow: hidden;
}
.taskstrip svg {
  display: block;
}
.clock {
  position: absolute;
  left: 1562px;
  top: 2px;
  font-size: 14px;
  line-height: 15px;
  color: #eee;
}
.video-bottom {
  background-color: #000;
}
.pen-tools {
  height: 26px;
  display: flex;
  align-items: center;
}
.tools {
  width: 458px;
  display: flex;
  align-items: center;
  padding-left: 6px;
}
.w18 {
  width: 18px;
  height: 20px;
  flex: none;
}
.g + .g {
  margin-left: 9px;
}
.g + .g.wide {
  margin-left: 10px;
}
.g-sep {
  display: block;
  width: 1px;
  height: 22px;
  margin: 0 9px;
  background-color: #444;
}
.pen-on {
  width: 25px;
  height: 25px;
  margin-left: 9px;
  border: 2px solid #c01818;
  display: flex;
  align-items: center;
  justify-content: center;
}
.bucket {
  margin-left: 8px;
}
.font-a {
  margin-left: 9px;
  font-family: "Liberation Serif", serif;
  font-size: 26px;
  line-height: 24px;
  color: #22d52a;
}
.sel {
  height: 24px;
  display: flex;
  align-items: center;
  border: 2px solid #1fae27;
  padding-right: 2px;
  color: #22d52a;
}
.sel b {
  width: 20px;
  height: 18px;
  border: 2px solid #1fae27;
  display: flex;
  align-items: center;
  justify-content: center;
}
.sel b i {
  border: 5px solid transparent;
  border-top: 7px solid #22d52a;
  border-bottom-width: 0;
}
.sel span {
  flex: 1;
}
.sel-font {
  width: 142px;
  border-color: #aaa;
  color: #ccc;
  font-size: 15px;
  padding-left: 1px;
  font-family: "Noto Sans CJK SC", sans-serif;
}
.sel-font b {
  border-color: #ccc;
}
.sel-font b i {
  border-top-color: #ddd;
}
.sel-size {
  width: 58px;
  margin-left: 11px;
  font-size: 13px;
  padding-left: 2px;
  font-family: "Liberation Serif", serif;
}
.sel-color {
  width: 76px;
  margin-left: 10px;
  padding-left: 3px;
}
.redbar {
  height: 15px;
  background-color: #f80000;
  border: 1px solid #f3c8c8;
  margin-right: 3px;
}
.site {
  margin-left: auto;
  font-family: "Liberation Mono", monospace;
  font-size: 12px;
  color: #1fc42a;
  white-space: nowrap;
}
.watermark {
  margin-top: 110px;
  padding-left: 20px;
  display: flex;
  align-items: center;
  color: #444;
  font-weight: 700;
  font-family: "Liberation Sans", sans-serif;
}
.bili {
  width: 79px;
  font-size: 33px;
  line-height: 34px;
  letter-spacing: -1px;
  transform: scale(.76, 1.15);
  transform-origin: left center;
}
.bv {
  margin-left: 2px;
  font-size: 22px;
  white-space: nowrap;
}
```
